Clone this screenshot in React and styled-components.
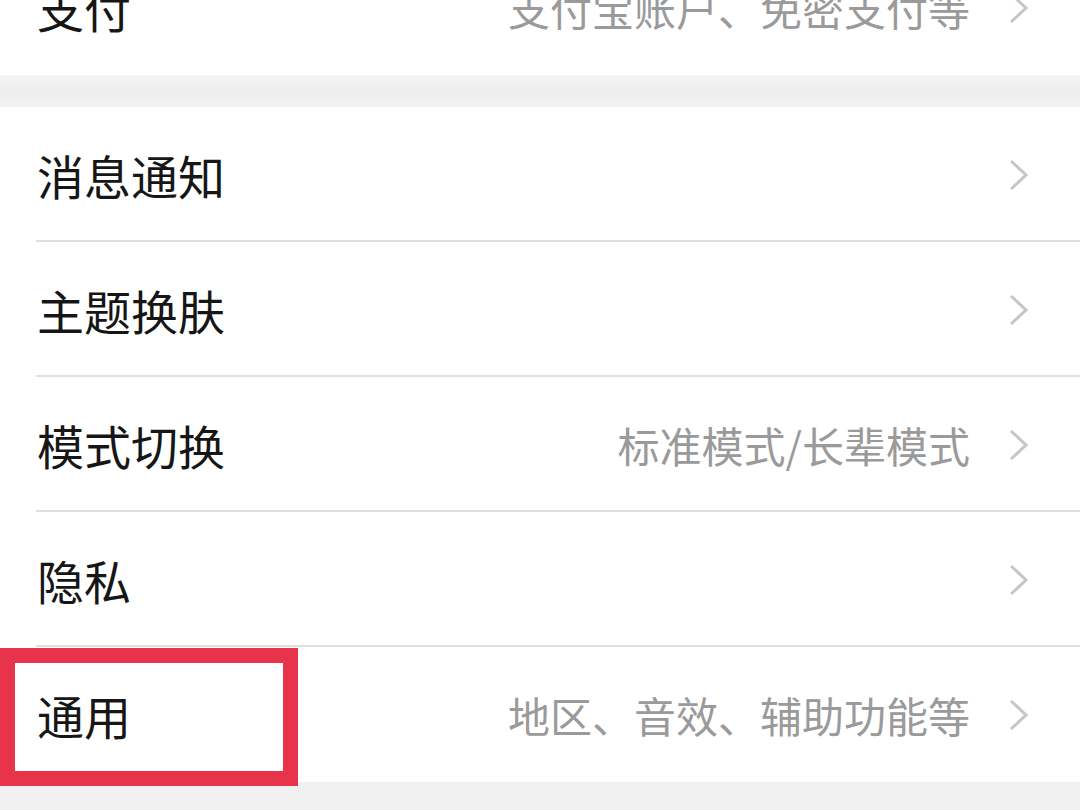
import React from "react";
import styled, { createGlobalStyle } from "styled-components";

const Global = createGlobalStyle`
  html, body { margin: 0; padding: 0; }
  body {
    width: 1080px;
    height: 810px;
    overflow: hidden;
    background: #f0f0f0;
    font-family: "Noto Sans CJK SC", "Noto Sans", sans-serif;
  }
`;

const Page = styled.div`
  display: flex;
  flex-direction: column;
  margin-top: -60px;
`;

const Group = styled.section`
  background: #ffffff;
  display: flex;
  flex-direction: column;
`;

const Gap = styled.div`
  height: 32px;
  background: linear-gradient(#f4f4f4, #ededed 50%, #f3f3f3);
`;

const Row = styled.div`
  position: relative;
  height: 135px;
  display: flex;
  align-items: center;
  padding: 0 50px 0 37px;
  box-sizing: border-box;
  &::after {
    content: "";
    display: ${(p) => (p.$last ? "none" : "block")};
    position: absolute;
    left: 36px;
    right: 0;
    bottom: 0;
    height: 2px;
    background: #e0e0e0;
  }
`;

const Title = styled.span`
  flex: 1;
  font-size: 47px;
  color: #161616;
`;

const Sub = styled.span`
  font-size: 42px;
  color: #9a9a9a;
  margin-right: 38px;
`;

const Chevron = styled.svg`
  width: 22px;
  height: 34px;
  flex-shrink: 0;
`;

const Highlight = styled.div`
  position: absolute;
  left: 0;
  top: 1px;
  width: 298px;
  height: 138px;
  box-sizing: border-box;
  border: 15px solid #e8344b;
  pointer-events: none;
`;

const Arrow = () => (
  <Chevron viewBox="0 0 22 34">
    <path d="M3 3 L18 17 L3 31" fill="none" stroke="#c6c6c6" strokeWidth="3" />
  </Chevron>
);

const Item = ({ title, sub, last, highlight }) => (
  <Row $last={last}>
    <Title>{title}</Title>
    {sub && <Sub>{sub}</Sub>}
    <Arrow />
    {highlight && <Highlight />}
  </Row>
);

export default function App() {
  return (
    <>
      <Global />
      <Page>
        <Group>
          <Item title="支付" sub="支付宝账户、免密支付等" last />
        </Group>
        <Gap />
        <Group>
          <Item title="消息通知" />
          <Item title="主题换肤" />
          <Item title="模式切换" sub="标准模式/长辈模式" />
          <Item title="隐私" />
          <Item title="通用" sub="地区、音效、辅助功能等" last highlight />
        </Group>
      </Page>
    </>
  );
}
